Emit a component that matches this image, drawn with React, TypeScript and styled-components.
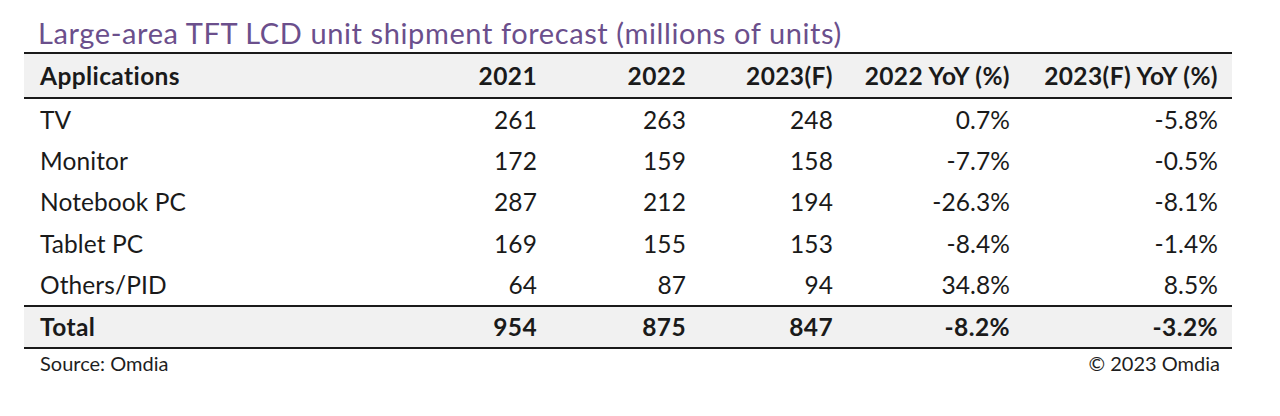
import styled, { createGlobalStyle } from "styled-components"

const GlobalStyle = createGlobalStyle`
  html, body {
    margin: 0;
    padding: 0;
    background: #ffffff;
  }
  body {
    font-family: Lato, "Open Sans", "Liberation Sans", sans-serif;
    color: #1a1a1a;
  }
`

const Page = styled.div`
  width: 1280px;
  height: 416px;
  padding: 14px 0 0 24px;
  box-sizing: border-box;
`

const Title = styled.h1`
  margin: 0;
  padding-left: 14px;
  height: 38px;
  line-height: 38px;
  font-size: 29px;
  letter-spacing: 0.6px;
  font-weight: 400;
  color: #6b4f8c;
  white-space: nowrap;
`

const Table = styled.div`
  width: 1208px;
  display: grid;
  grid-template-columns: 377px 150px 149px 147px 177px 208px;
  border-top: 2px solid #1a1a1a;
`

const Row = styled.div<{ $kind?: "head" | "total" }>`
  display: contents;
  & > div {
    height: ${({ $kind }) =>
      $kind === "head" ? "43px" : $kind === "total" ? "40px" : "41.2px"};
    background: ${({ $kind }) => ($kind ? "#f1f1f1" : "#ffffff")};
    font-weight: ${({ $kind }) => ($kind ? 700 : 400)};
    letter-spacing: ${({ $kind }) => ($kind ? "0.4px" : "0.1px")};
    border-bottom: ${({ $kind }) => ($kind ? "2px solid #1a1a1a" : "none")};
    border-top: ${({ $kind }) =>
      $kind === "total" ? "2px solid #1a1a1a" : "none"};
  }
`

const Cell = styled.div<{ $label?: boolean }>`
  display: flex;
  align-items: center;
  justify-content: ${({ $label }) => ($label ? "flex-start" : "flex-end")};
  padding: ${({ $label }) => ($label ? "0 0 0 16px" : "0 14px 0 0")};
  font-size: 24.5px;
  white-space: nowrap;
`

const Footer = styled.div`
  width: 1208px;
  display: flex;
  justify-content: space-between;
  height: 28px;
  line-height: 28px;
  padding: 0 12px 0 16px;
  box-sizing: border-box;
  font-size: 20px;
  color: #1e1e1e;
`

const headers = ["Applications", "2021", "2022", "2023(F)", "2022 YoY (%)", "2023(F) YoY (%)"]

const rows = [
  ["TV", "261", "263", "248", "0.7%", "-5.8%"],
  ["Monitor", "172", "159", "158", "-7.7%", "-0.5%"],
  ["Notebook PC", "287", "212", "194", "-26.3%", "-8.1%"],
  ["Tablet PC", "169", "155", "153", "-8.4%", "-1.4%"],
  ["Others/PID", "64", "87", "94", "34.8%", "8.5%"],
]

const total = ["Total", "954", "875", "847", "-8.2%", "-3.2%"]

function renderCells(cells: string[]) {
  return cells.map((c, i) => (
    <Cell key={i} $label={i === 0}>
      {c}
    </Cell>
  ))
}

export default function App() {
  return (
    <Page>
      <GlobalStyle />
      <Title>Large-area TFT LCD unit shipment forecast (millions of units)</Title>
      <Table>
        <Row $kind="head">{renderCells(headers)}</Row>
        {rows.map((r) => (
          <Row key={r[0]}>{renderCells(r)}</Row>
        ))}
        <Row $kind="total">{renderCells(total)}</Row>
      </Table>
      <Footer>
        <span>Source: Omdia</span>
        <span>© 2023 Omdia</span>
      </Footer>
    </Page>
  )
}
